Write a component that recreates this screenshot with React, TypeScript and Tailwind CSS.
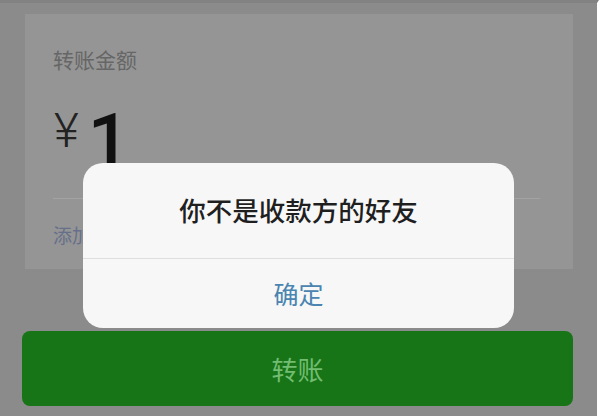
import React from "react";

const cjk = { fontFamily: '"Noto Sans CJK SC", "Noto Sans", sans-serif' };
const latin = { fontFamily: 'Roboto, "Liberation Sans", Arial, sans-serif' };

export default function App() {
  return (
    <div
      className="relative h-[416px] w-[599px] overflow-hidden border-t-[3px] border-r-[2px] border-t-[#828282] border-r-white bg-[#8b8b8b]"
      style={cjk}
    >
      {/* amount card */}
      <div className="ml-[25px] mt-[11px] h-[255px] w-[548px] bg-[#959595] px-[28px] pt-[35px]">
        <p className="text-[21px] leading-none text-[#666]">转账金额</p>

        <div className="mt-[34px] flex items-start" style={latin}>
          <span className="mt-[3px] ml-[1px] text-[48px] font-light leading-none text-[#222]">¥</span>
          <span className="ml-[9px] text-[74px] font-medium leading-none text-[#111]">1</span>
        </div>

        <div className="mt-[20px] mr-[5px] h-px bg-[#a3a3a3]" />

        <p className="mt-[26px] text-[19px] leading-none text-[#66708a]">添加转账说明</p>
      </div>

      {/* transfer button */}
      <button className="ml-[22px] mt-[62px] flex h-[75px] w-[551px] items-center justify-center rounded-[8px] bg-[#177517]">
        <span className="text-[26px] leading-none text-[#72bd72]">转账</span>
      </button>

      {/* alert */}
      <div className="absolute left-[83px] top-[160px] w-[431px] overflow-hidden rounded-[20px] bg-[#f7f7f7]">
        <div className="flex h-[96px] items-center justify-center border-b border-[#dedede]">
          <span className="text-[26.5px] font-medium leading-none text-[#1f1f1f]">你不是收款方的好友</span>
        </div>
        <div className="flex h-[69px] items-center justify-center">
          <span className="text-[25px] leading-none text-[#4a84b0]">确定</span>
        </div>
      </div>
    </div>
  );
}
